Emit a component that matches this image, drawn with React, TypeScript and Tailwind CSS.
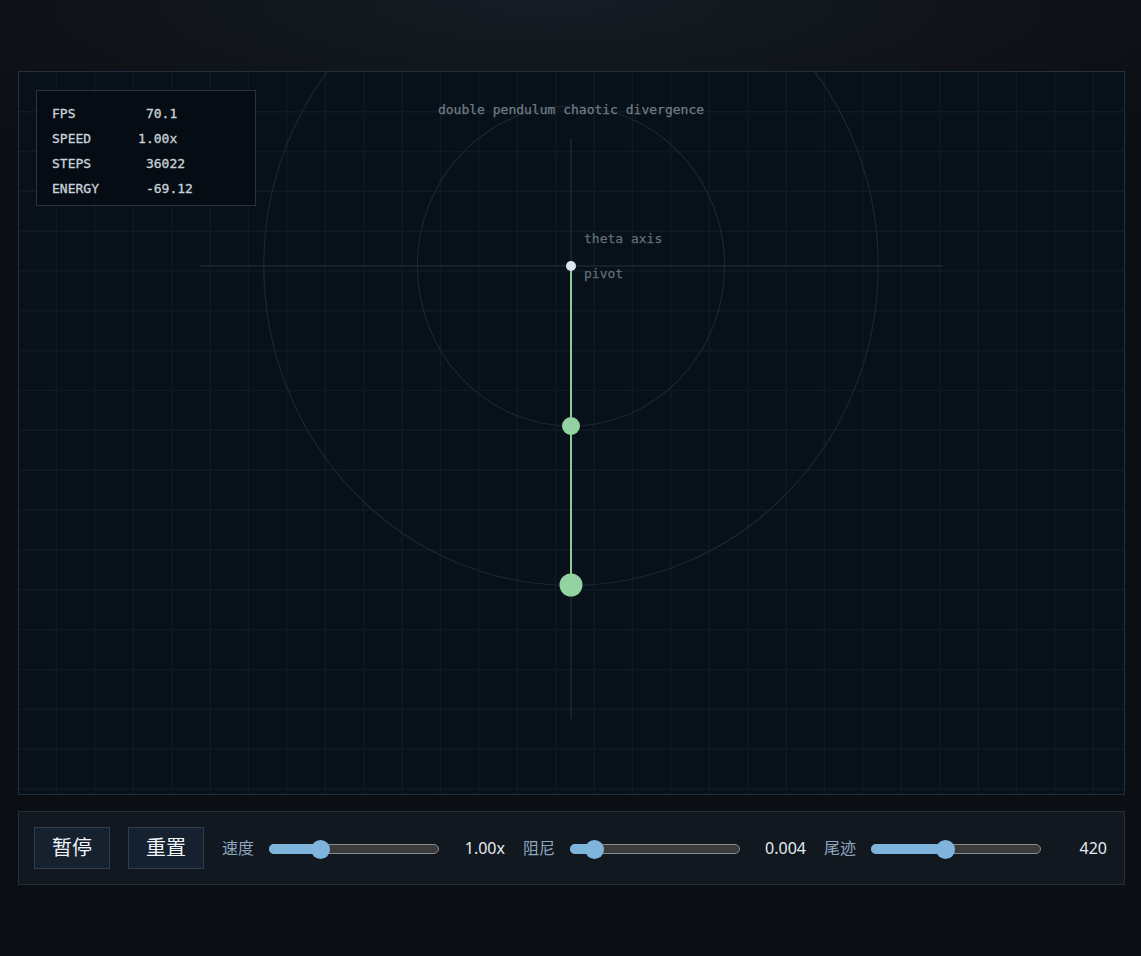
import React from "react";

const mono = "font-['DejaVu_Sans_Mono','Liberation_Mono',monospace]";

// columns padded like the original text readout
const stats = [
    "FPS         70.1",
    "SPEED      1.00x",
    "STEPS       36022",
    "ENERGY      -69.12",
];

function Slider({ fill, thumb }: { fill: string; thumb: string }) {
    return (
        <div className="relative h-[20px] w-[170px] shrink-0 translate-y-[1px]">
            <div className="absolute left-0 right-0 top-[5px] h-[10px] rounded-full border border-[#8a8a8a] bg-[#3b3b3b]" />
            <div className={"absolute left-0 top-[5px] h-[10px] rounded-l-full bg-[#7fb5dc] " + fill} />
            <div className={"absolute top-[0.5px] h-[19px] w-[19px] rounded-full bg-[#7fb5dc] " + thumb} />
        </div>
    );
}

function Control({ label, value, fill, thumb }: { label: string; value: string; fill: string; thumb: string }) {
    return (
        <div className="flex shrink-0 items-center">
            <span className="w-[33px] whitespace-nowrap text-[16px] text-[#8ea7bf]">{label}</span>
            <div className="ml-[14px]">
                <Slider fill={fill} thumb={thumb} />
            </div>
            <span className="ml-[14px] w-[52px] text-right text-[16px] text-[#e4ebf2]">{value}</span>
        </div>
    );
}

function Canvas() {
    const vLines = Array.from({ length: 28 }, (_, i) => -1 + 38.4 * (i + 1));
    const hLines = Array.from({ length: 18 }, (_, i) => 39.84 * (i + 1) - 0.2);
    return (
        <svg width="1105" height="722" viewBox="0 0 1105 722" className="block">
            {vLines.map((x) => (
                <line key={"v" + x} x1={x} y1={0} x2={x} y2={722} stroke="#0f1a24" strokeWidth={1.5} />
            ))}
            {hLines.map((y) => (
                <line key={"h" + y} x1={0} y1={y} x2={1105} y2={y} stroke="#0f1a24" strokeWidth={1.5} />
            ))}
            <line x1={181} y1={194} x2={924} y2={194} stroke="#1c2730" strokeWidth={1.5} />
            <line x1={552} y1={66} x2={552} y2={647} stroke="#1c2730" strokeWidth={1.5} />
            <ellipse cx={552} cy={194} rx={153.6} ry={160} fill="none" stroke="#1c2731" strokeWidth={1.2} />
            <ellipse cx={552} cy={194} rx={307.2} ry={319.5} fill="none" stroke="#1c2731" strokeWidth={1.2} />
            <g fontSize={13} fontFamily="DejaVu Sans Mono, monospace" stroke="currentColor" strokeWidth={0.25}>
                <text x={552} y={42} textAnchor="middle" fill="#707c86" color="#707c86">
                    double pendulum chaotic divergence
                </text>
                <text x={565} y={171} fill="#636e77" color="#636e77">
                    theta axis
                </text>
                <text x={565} y={206} fill="#636e77" color="#636e77">
                    pivot
                </text>
            </g>
            <line x1={552} y1={194} x2={552} y2={513} stroke="#8fca98" strokeWidth={2} />
            <circle cx={552} cy={354} r={9} fill="#93d3a2" />
            <circle cx={552} cy={513} r={11.5} fill="#93d3a2" />
            <circle cx={552} cy={194} r={5} fill="#dde6ee" />
        </svg>
    );
}

export default function App() {
    return (
        <div className="flex min-h-screen flex-col justify-center gap-4 bg-[#0b0e12] bg-[radial-gradient(ellipse_70%_20%_at_48%_0%,#161c24_0%,#0b0e12_100%)] pl-[18px] font-['Noto_Sans','Noto_Sans_CJK_SC',sans-serif]">
            <div className="relative h-[724px] w-[1107px] border border-[#22303d] bg-[#08101a]">
                <Canvas />
                <div className={"absolute left-[17px] top-[18px] h-[116px] w-[220px] border border-[#26343f] bg-[#060c13]/90 px-[15px] pt-[10px] text-[13px] leading-[25px] text-[#c9d2da] [-webkit-text-stroke:0.3px_#c9d2da] " + mono}>
                    {stats.map((s) => (
                        <div key={s} className="whitespace-pre">
                            {s}
                        </div>
                    ))}
                </div>
            </div>
            <div className="flex h-[74px] w-[1107px] items-center gap-[18px] border border-[#25303c] bg-[#111820] px-[15px]">
                <button className="h-[42px] w-[76px] shrink-0 border border-[#2e3e4f] bg-[#162130] text-[20px] text-[#f0f4f8]">暂停</button>
                <button className="h-[42px] w-[76px] shrink-0 border border-[#2e3e4f] bg-[#162130] text-[20px] text-[#f0f4f8]">重置</button>
                <Control label="速度" value="1.00x" fill="w-[52px]" thumb="left-[42px]" />
                <Control label="阻尼" value="0.004" fill="w-[24px]" thumb="left-[14.5px]" />
                <Control label="尾迹" value="420" fill="w-[74px]" thumb="left-[64.5px]" />
            </div>
        </div>
    );
}
